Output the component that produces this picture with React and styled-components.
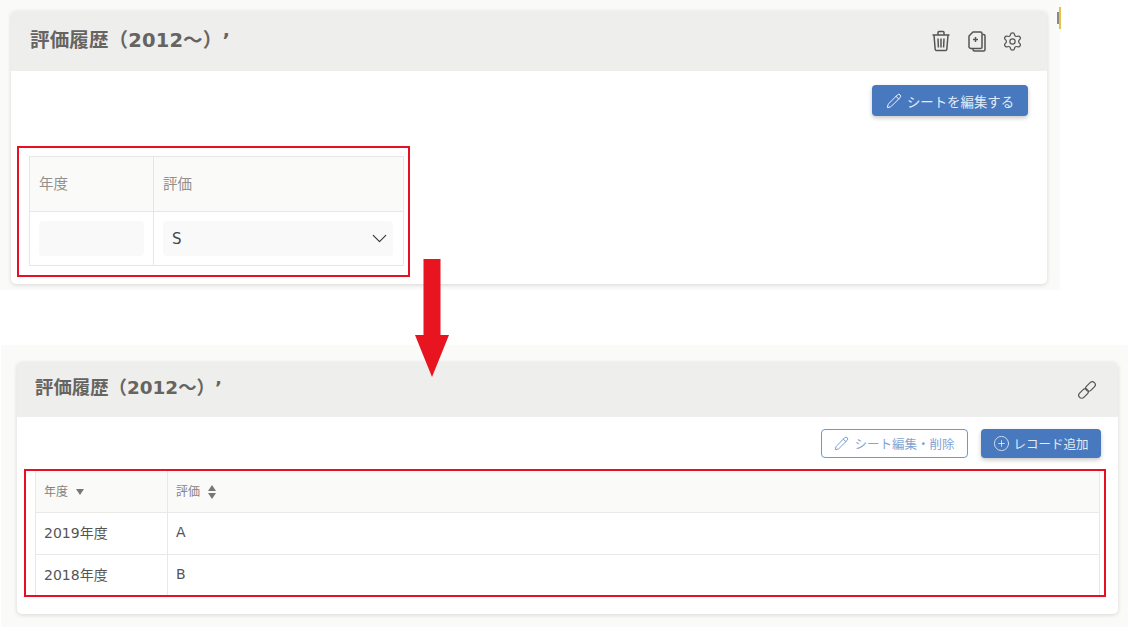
import React from "react";
import styled, { createGlobalStyle } from "styled-components";
import { Pencil, Settings, ChevronDown, CirclePlus } from "lucide-react";

const Global = createGlobalStyle`
  html, body { margin: 0; padding: 0; background: #fff; }
  body {
    font-family: "DejaVu Sans", "Noto Sans CJK JP", sans-serif;
    text-spacing-trim: space-all;
    width: 1128px;
    height: 627px;
    overflow: hidden;
  }
`;

const Page = styled.div`
  position: relative;
  display: flex;
  flex-direction: column;
  width: 1128px;
  height: 627px;
  overflow: hidden;
`;

const TopPanel = styled.section`
  width: 1060px;
  height: 290px;
  box-sizing: border-box;
  padding: 11px 13px 6px 11px;
  background: #fafaf9;
`;

const BottomPanel = styled.section`
  margin: 55px 0 0 1px;
  height: 282px;
  box-sizing: border-box;
  padding: 17px 10px 13px 16px;
  background: #fafaf9;
`;

const Card = styled.div`
  height: 100%;
  display: flex;
  flex-direction: column;
  background: #fff;
  border-radius: 5px;
  overflow: hidden;
  box-shadow: 0 1px 4px rgba(0, 0, 0, 0.14);
`;

const CardHeader = styled.header`
  height: ${(p) => p.$h}px;
  flex: none;
  display: flex;
  align-items: center;
  justify-content: space-between;
  box-sizing: border-box;
  padding: ${(p) => p.$pad};
  background: #eeeeed;
`;

const Title = styled.h2`
  margin: 0 0 ${(p) => p.$lift}px;
  font-size: ${(p) => p.$size}px;
  letter-spacing: ${(p) => p.$track}px;
  line-height: 1;
  font-weight: 700;
  color: #666461;
  white-space: nowrap;
`;

const IconRow = styled.div`
  display: flex;
  align-items: center;
  gap: 16.500px;
  color: #555;
`;

const Toolbar = styled.div`
  display: flex;
  justify-content: flex-end;
  align-items: center;
  gap: 13px;
  padding: ${(p) => p.$pad};
`;

const Button = styled.button`
  display: inline-flex;
  align-items: center;
  justify-content: center;
  gap: ${(p) => p.$gap || 5}px;
  box-sizing: border-box;
  width: ${(p) => p.$w}px;
  height: ${(p) => p.$h}px;
  padding: 0;
  font-family: inherit;
  font-size: ${(p) => p.$size || 13}px;
  border-radius: 4px;
  border: ${(p) => (p.$outline ? "1px solid #7097d0" : "none")};
  background: ${(p) => (p.$outline ? "#fff" : "#4878bd")};
  color: ${(p) => (p.$outline ? "#84a3d2" : "#e3ebf6")};
  box-shadow: ${(p) => (p.$outline ? "none" : "0 2px 4px rgba(0,0,0,0.22)")};
`;

const ButtonIcon = styled.span`
  display: inline-flex;
  color: ${(p) => (p.$outline ? "#6f96cf" : "#f2f5fb")};
`;

const RedFrame = styled.div`
  box-sizing: border-box;
  width: ${(p) => p.$w};
  height: ${(p) => p.$h}px;
  margin: ${(p) => p.$margin};
  padding: ${(p) => p.$pad};
  border: 2px solid #e60f23;
`;

const EditGrid = styled.div`
  display: grid;
  grid-template-columns: 123px 1fr;
  grid-template-rows: 55px 53px;
  box-sizing: border-box;
  height: 110px;
  border: 1px solid #e6e6e5;
`;

const EditHead = styled.div`
  display: flex;
  align-items: center;
  padding: 0 0 4px 9px;
  background: #fafaf9;
  font-size: 14.500px;
  color: #928f8c;
  border-bottom: 1px solid #e6e6e5;
  border-left: ${(p) => (p.$first ? "none" : "1px solid #e6e6e5")};
`;

const EditCell = styled.div`
  display: flex;
  align-items: center;
  box-sizing: border-box;
  padding: ${(p) => (p.$first ? "0 9px" : "0 10px 0 9px")};
  border-left: ${(p) => (p.$first ? "none" : "1px solid #e6e6e5")};
`;

const Field = styled.div`
  flex: 1;
  height: 35px;
  display: flex;
  align-items: center;
  justify-content: space-between;
  box-sizing: border-box;
  padding: 0 1px 0 9px;
  background: #f9f9f9;
  border-radius: 4px;
  font-size: 15px;
  color: #444;
`;

const DataTable = styled.table`
  width: 100%;
  border-collapse: collapse;
  table-layout: fixed;
`;

const Th = styled.th`
  height: 41px;
  box-sizing: border-box;
  padding: 0 0 2px 8px;
  text-align: left;
  font-weight: 400;
  font-size: 12px;
  color: #86837f;
  background: #fafaf9;
  border: 1px solid #e8e8e7;
  border-top: none;
  width: ${(p) => p.$w || "auto"};
`;

const Td = styled.td`
  height: ${(p) => p.$h}px;
  box-sizing: border-box;
  padding: 0 0 2px 8px;
  border: 1px solid #e8e8e7;
  border-bottom: ${(p) => (p.$last ? "none" : "1px solid #e8e8e7")};
  font-size: 14px;
  color: #555;
`;

const SortMark = styled.svg`
  margin-left: 8px;
  vertical-align: ${(p) => p.$align}px;
`;

const Arrow = styled.svg`
  position: absolute;
  left: 415px;
  top: 259px;
`;

const EdgeMark = styled.svg`
  position: absolute;
  left: 1056px;
  top: 6px;
`;

const Trash = () => (
  <svg width="20" height="22" viewBox="0 0 20 22" fill="none" stroke="currentColor" strokeWidth="1.5">
    <path d="M1.500 5h17M7 5V2.500C7 1.800 7.500 1.500 8 1.500h4c.5 0 1 .3 1 1V5M3 5l1.200 14.500c.1.7.6 1 1.200 1h9.200c.6 0 1.100-.3 1.200-1L17 5M7 8.500l.4 9M10 8.500v9M13 8.500l-.4 9" />
  </svg>
);

const PagePlus = () => (
  <svg width="18" height="21" viewBox="0 0 18 21" fill="none" stroke="currentColor" strokeWidth="1.5">
    <path d="M5 1h7.500c.8 0 1.500.7 1.500 1.500V16c0 .8-.7 1.500-1.500 1.500h-9C2.700 17.500 1 16.800 1 16V5z" />
    <path d="M14.500 3.500h1c.8 0 1.500.7 1.500 1.500v13.500c0 .8-.7 1.500-1.500 1.500h-9c-.8 0-1.500-.7-1.500-1.500V18" />
    <path d="M7.500 6v5M5 8.500h5" />
  </svg>
);

const ChainLink = () => (
  <svg width="20" height="20" viewBox="0 0 20 20" fill="none" stroke="currentColor" strokeWidth="1.200">
    <rect x="8" y="3.500" width="11" height="6" rx="3" transform="rotate(-45 13.500 6.500)" />
    <rect x="1" y="10.500" width="11" height="6" rx="3" transform="rotate(-45 6.500 13.500)" />
  </svg>
);

export default function App() {
  return (
    <Page>
      <Global />
      <TopPanel>
        <Card>
          <CardHeader $h={60} $pad="0 24px 0 19px">
            <Title $size={19.500} $track={0.15} $lift={0}>評価履歴（2012～）’</Title>
            <IconRow>
              <Trash />
              <PagePlus />
              <Settings size={21} strokeWidth={1.4} />
            </IconRow>
          </CardHeader>
          <Toolbar $pad="14px 19px 0 0">
            <Button $w={156} $h={31} $size={13.400}>
              <ButtonIcon>
                <Pencil size={16} strokeWidth={1.5} />
              </ButtonIcon>
              シートを編集する
            </Button>
          </Toolbar>
          <RedFrame $w="393px" $h={131} $margin="30px 0 0 6px" $pad="8px 4px 9px 10px">
            <EditGrid>
              <EditHead $first>年度</EditHead>
              <EditHead>評価</EditHead>
              <EditCell $first>
                <Field />
              </EditCell>
              <EditCell>
                <Field>
                  S
                  <ChevronDown size={25} strokeWidth={1.1} color="#333" />
                </Field>
              </EditCell>
            </EditGrid>
          </RedFrame>
        </Card>
      </TopPanel>
      <BottomPanel>
        <Card>
          <CardHeader $h={55} $pad="0 21px 0 18px">
            <Title $size={18.400} $track={0} $lift={2}>評価履歴（2012～）’</Title>
            <IconRow>
              <ChainLink />
            </IconRow>
          </CardHeader>
          <Toolbar $pad="12px 17px 0 0">
            <Button $outline $w={147} $h={29} $size={12.500}>
              <ButtonIcon $outline>
                <Pencil size={15} strokeWidth={1.5} />
              </ButtonIcon>
              シート編集・削除
            </Button>
            <Button $w={120} $h={29} $size={12.500} $gap={3}>
              <CirclePlus size={17} strokeWidth={1.2} />
              レコード追加
            </Button>
          </Toolbar>
          <RedFrame $w="1082px" $h={128} $margin="11px 0 0 7px" $pad="0 4px 0 9px">
            <DataTable>
              <thead>
                <tr>
                  <Th $w="132px">
                    年度
                    <SortMark $align={1} width="8" height="6" viewBox="0 0 8 6">
                      <path d="M0 0h8L4 6z" fill="#777" />
                    </SortMark>
                  </Th>
                  <Th>
                    評価
                    <SortMark $align={-3} width="8" height="14" viewBox="0 0 8 14">
                      <path d="M0 6h8L4 0zM0 8h8l-4 6z" fill="#777" />
                    </SortMark>
                  </Th>
                </tr>
              </thead>
              <tbody>
                <tr>
                  <Td $h={42}>2019年度</Td>
                  <Td $h={42}>A</Td>
                </tr>
                <tr>
                  <Td $h={41} $last>2018年度</Td>
                  <Td $h={41} $last>B</Td>
                </tr>
              </tbody>
            </DataTable>
          </RedFrame>
        </Card>
      </BottomPanel>
      <Arrow width="34" height="118" viewBox="0 0 34 118">
        <path d="M8.500 0h17v76H34L17 118 0 76h8.500z" fill="#e8141f" />
      </Arrow>
      <EdgeMark width="5" height="24" viewBox="0 0 5 24">
        <rect x="1" y="6" width="2" height="12" fill="#8a8a8a" />
        <rect x="3" y="1" width="2" height="22" fill="#e9c04a" />
      </EdgeMark>
    </Page>
  );
}
